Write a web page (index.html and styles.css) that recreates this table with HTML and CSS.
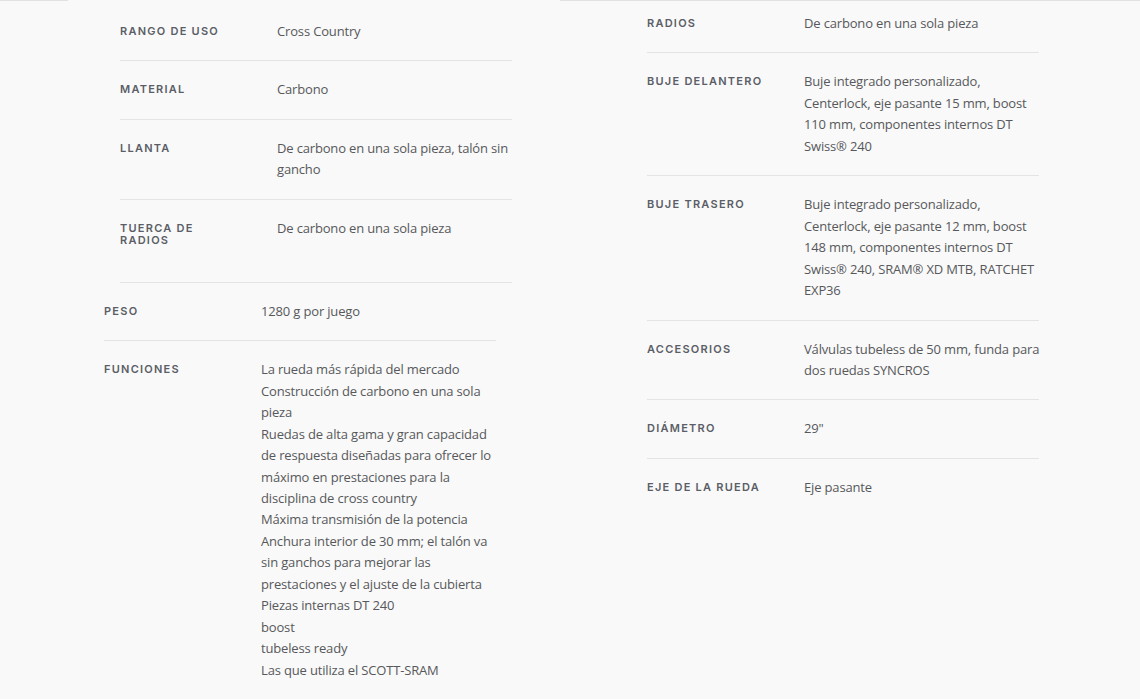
FILE: index.html
```html
<!DOCTYPE html>
<html lang="es">
<head>
<meta charset="utf-8">
<title>Especificaciones</title>
<link rel="stylesheet" href="styles.css">
</head>
<body>
<div class="topline">
  <div class="topline__left"></div>
  <div class="topline__right"></div>
</div>
<main class="specs">
  <section class="col col--left">
    <div class="group">
      <div class="row">
        <div class="label">Rango de uso</div>
        <div class="value">Cross Country</div>
      </div>
      <div class="row">
        <div class="label">Material</div>
        <div class="value">Carbono</div>
      </div>
      <div class="row">
        <div class="label">Llanta</div>
        <div class="value">De carbono en una sola pieza, talón sin gancho</div>
      </div>
      <div class="row row--last">
        <div class="label">Tuerca de radios</div>
        <div class="value">De carbono en una sola pieza</div>
      </div>
    </div>
    <div class="row">
      <div class="label">Peso</div>
      <div class="value">1280 g por juego</div>
    </div>
    <div class="row row--last">
      <div class="label">Funciones</div>
      <div class="value">La rueda más rápida del mercado<br>Construcción de carbono en una sola pieza<br>Ruedas de alta gama y gran capacidad de respuesta diseñadas para ofrecer lo máximo en prestaciones para la disciplina de cross country<br>Máxima transmisión de la potencia<br>Anchura interior de 30 mm; el talón va sin ganchos para mejorar las prestaciones y el ajuste de la cubierta<br>Piezas internas DT 240<br>boost<br>tubeless ready<br>Las que utiliza el SCOTT-SRAM</div>
    </div>
  </section>
  <section class="col col--right">
    <div class="row row--first">
      <div class="label">Radios</div>
      <div class="value">De carbono en una sola pieza</div>
    </div>
    <div class="row">
      <div class="label">Buje delantero</div>
      <div class="value">Buje integrado personalizado, Centerlock, eje pasante 15 mm, boost 110 mm, componentes internos DT Swiss® 240</div>
    </div>
    <div class="row">
      <div class="label">Buje trasero</div>
      <div class="value">Buje integrado personalizado, Centerlock, eje pasante 12 mm, boost 148 mm, componentes internos DT Swiss® 240, SRAM® XD MTB, RATCHET EXP36</div>
    </div>
    <div class="row">
      <div class="label">Accesorios</div>
      <div class="value">Válvulas tubeless de 50 mm, funda para dos ruedas SYNCROS</div>
    </div>
    <div class="row">
      <div class="label">Diámetro</div>
      <div class="value">29"</div>
    </div>
    <div class="row row--last">
      <div class="label">Eje de la rueda</div>
      <div class="value">Eje pasante</div>
    </div>
  </section>
</main>
</body>
</html>
```

FILE: styles.css
```css
* { box-sizing: border-box; }

html, body {
  margin: 0;
  padding: 0;
  background: #f9f9f9;
  height: 100%;
  overflow: hidden;
}

body {
  font-family: "Open Sans", "Liberation Sans", sans-serif;
  color: #57585b;
}

.topline {
  display: flex;
  justify-content: space-between;
  height: 1px;
}

.topline__left {
  width: 68px;
  border-top: 1px solid #e2e2e2;
}

.topline__right {
  width: 580px;
  border-top: 1px solid #e2e2e2;
}

.specs {
  display: grid;
  grid-template-columns: 392px 392px;
  column-gap: 151px;
  padding-left: 104px;
  align-items: start;
}

.col--left {
  padding-top: 2px;
}

.group {
  margin-left: 16px;
  margin-right: -16px;
  padding-bottom: 18px;
  border-bottom: 1px solid #e4e4e4;
}

.row {
  display: grid;
  grid-template-columns: 157px 1fr;
  padding: 18px 0;
  border-bottom: 1px solid #e4e4e4;
}

.row--first {
  padding-top: 12px;
}

.row--last {
  border-bottom: none;
}

.label {
  font-family: Inter, "Liberation Sans", sans-serif;
  font-weight: 600;
  font-size: 11px;
  line-height: 12px;
  letter-spacing: 1.25px;
  text-transform: uppercase;
  color: #5b5e66;
  margin-top: 4px;
  max-width: 122px;
}

.value {
  font-size: 13px;
  line-height: 21.45px;
  letter-spacing: -0.16px;
  color: #57585b;
  margin-right: -5px;
}
```
